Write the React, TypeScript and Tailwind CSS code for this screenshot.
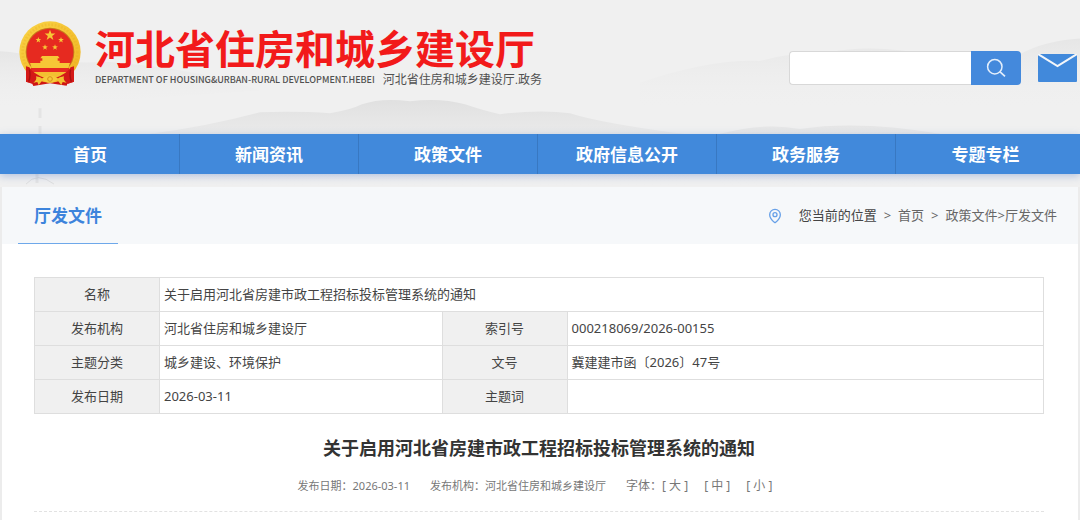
import { MapPin } from "lucide-react"

// ─── CONSTANTS ────────────────────────────────────────────────────────────────

const NAV_ITEMS = ["首页", "新闻资讯", "政策文件", "政府信息公开", "政务服务", "专题专栏"]

const LABEL_CLASS = "border border-[#dedede] bg-[#f0f0f0] p-0 text-center font-normal"
const VALUE_CLASS = "border border-[#dedede] px-1 py-0"

const STAR = "M0 -10 L2.4 -3.2 L9.5 -3.1 L3.8 1.2 L5.9 8.1 L0 4 L-5.9 8.1 L-3.8 1.2 L-9.5 -3.1 L-2.4 -3.2 Z"

// ─── DRAWINGS ─────────────────────────────────────────────────────────────────

function Emblem() {
  return (
    <svg viewBox="27 18 186 198" className="h-[66px] w-[62px] shrink-0" role="img" aria-label="国徽">
      <defs>
        <linearGradient id="gold" x1="0" y1="0" x2="1" y2="1">
          <stop offset="0" stopColor="#f9d447" />
          <stop offset="1" stopColor="#f0b322" />
        </linearGradient>
      </defs>
      <path d="M48 156 L60 150 H180 L192 156 L192 200 L172 206 L170 212 L120 205 L70 213 L66 205 L48 200 Z" fill="#cf1513" />
      <circle cx="120" cy="111" r="92" fill="url(#gold)" />
      <circle cx="120" cy="111" r="82" fill="none" stroke="#e9a91c" strokeWidth="8" strokeDasharray="5 5" opacity="0.3" />
      <circle cx="120" cy="111" r="73" fill="#c9761b" />
      <circle cx="120" cy="111" r="70" fill="#e62a20" />
      <g fill="#f6c836">
        <path d={STAR} transform="translate(120 61) scale(1.7)" />
        <path d={STAR} transform="translate(85 75) scale(0.9)" />
        <path d={STAR} transform="translate(153 75) scale(0.9)" />
        <path d={STAR} transform="translate(105 97) scale(0.9)" />
        <path d={STAR} transform="translate(135 97) scale(0.9)" />
        <path d="M96 123 H144 L149 130 H143 V137 H149 V144 H91 V137 H97 V130 H91 Z" />
        <path d="M60 144 H180 L175 159 H65 Z" />
      </g>
      <path d="M63 159 H177 V171 H63 Z" fill="#e62a20" />
      <path d="M66 171 H174 L150 190 H90 Z" fill="#f3c031" />
      <path d="M48 154 L58 157 Q72 178 102 188 L66 206 L48 200 Z" fill="#d41917" />
      <path d="M192 154 L182 157 Q168 178 138 188 L174 206 L192 200 Z" fill="#d41917" />
      <path d="M58 164 Q63 180 56 200 M182 164 Q177 180 184 200" stroke="#a90f10" strokeWidth="4" fill="none" />
      <path d="M78 184 Q92 186 100 193 L86 210 L82 201 L70 203 Q82 195 78 184 Z" fill="#f3c031" />
      <path d="M162 184 Q148 186 140 193 L154 210 L158 201 L170 203 Q158 195 162 184 Z" fill="#f3c031" />
      <path d="M96 191 Q120 170 144 191 Q120 216 96 191 Z" fill="#f6ca3a" />
      <circle cx="120" cy="192" r="7" fill="none" stroke="#d9901a" strokeWidth="3" />
    </svg>
  )
}

// Ink-wash hills behind the header and the navigation
function Hills() {
  return (
    <svg viewBox="0 0 1080 190" preserveAspectRatio="none" className="absolute inset-0 h-full w-full" aria-hidden="true">
      <defs>
        <linearGradient id="hill" x1="0" y1="0" x2="0" y2="1">
          <stop offset="0" stopColor="#dcdcdc" />
          <stop offset="1" stopColor="#efefef" stopOpacity="0" />
        </linearGradient>
      </defs>
      <g fill="url(#hill)">
        <path d="M0 52 Q20 53 40 59 T110 63 Q200 70 260 92 L0 110 Z" opacity="0.5" />
        <path d="M150 136 Q210 128 260 114 Q300 113 330 115 Q350 112 362 106 Q382 99 410 103 Q440 99 465 106 Q485 113 500 116 Q540 111 570 115 Q600 125 690 137 V190 H150 Z" opacity="0.8" />
        <path d="M640 84 Q710 60 760 62 Q790 53 830 53 Q860 47 900 51 Q960 61 1020 55 Q1045 41 1080 39 V110 H640 Z" opacity="0.5" />
        <path d="M720 136 Q765 124 800 131 Q860 122 940 136 V190 H720 Z" opacity="0.5" />
      </g>
      <g fill="none" stroke="#d2d2d2">
        <path d="M40 110 V120 M40 128 V136 M37 176 V186" strokeWidth="3" opacity="0.4" />
        <path d="M26 187 Q37 174 54 187" opacity="0.6" />
      </g>
    </svg>
  )
}

function SearchIcon() {
  return (
    <svg viewBox="0 0 20 20" className="h-5 w-5" fill="none" stroke="#e3eefb" aria-hidden="true">
      <circle cx="8.8" cy="8.7" r="7.2" strokeWidth="1.5" />
      <path d="M13.8 13.6 L19 18.4" strokeWidth="1.7" />
    </svg>
  )
}

// ─── PAGE ─────────────────────────────────────────────────────────────────────

export default function App() {
  return (
    <div className="min-h-screen bg-[#ececec] font-['Noto_Sans','Noto_Sans_CJK_SC',sans-serif] text-[#444]">
      {/* ── HEADER ────────────────────────────────────────────────────── */}
      <div className="relative bg-[#f0f0f0] pb-[13px]">
        <Hills />

        <header className="relative flex h-[134px] items-start justify-between pr-[3px] pl-[19px]">
          <div className="flex gap-[14px] pt-[21px]">
            <Emblem />
            <div className="pt-[6px]">
              <h1 className="font-['Liberation_Sans','Noto_Sans_CJK_SC',sans-serif] text-[40px] leading-[46px] font-bold whitespace-nowrap text-[#f21a1a]">
                河北省住房和城乡建设厅
              </h1>
              <p className="flex items-center gap-2 leading-[14px] whitespace-nowrap text-[#505050]">
                <span className="font-['Noto_Sans_CJK_SC',sans-serif] text-[9px] font-medium">
                  DEPARTMENT OF HOUSING&amp;URBAN-RURAL DEVELOPMENT.HEBEI
                </span>
                <span className="font-['Liberation_Sans','Noto_Sans_CJK_SC',sans-serif] text-[12px]">
                  河北省住房和城乡建设厅.政务
                </span>
              </p>
            </div>
          </div>

          <div className="flex items-center gap-[17px] pt-[51px]">
            <form className="flex h-[34px]" role="search" onSubmit={(e) => e.preventDefault()}>
              <input
                type="text"
                aria-label="搜索"
                className="w-[182px] rounded-l-[4px] border border-r-0 border-[#d8d8d8] bg-white px-2 text-[13px] outline-none"
              />
              <button
                type="submit"
                aria-label="搜索"
                className="flex w-[50px] items-center justify-center rounded-r-[4px] bg-[#4489dc]"
              >
                <SearchIcon />
              </button>
            </form>
            <a href="#mail" aria-label="邮箱">
              <svg viewBox="0 0 39 28" className="h-7 w-[39px]" aria-hidden="true">
                <rect width="39" height="28" rx="1" fill="#4189db" />
                <path d="M0 0 L19.5 12 L39 0" fill="none" stroke="#f3f6fa" strokeWidth="2" />
              </svg>
            </a>
          </div>
        </header>

        {/* ── NAVIGATION ──────────────────────────────────────────────── */}
        <nav className="relative grid h-10 grid-cols-6 bg-[#4189db] pr-[5px] pl-px shadow-[0_2px_8px_rgba(65,110,190,0.35)]">
          {NAV_ITEMS.map((item) => (
            <a
              key={item}
              href="#nav"
              className="flex items-center justify-center border-r border-[#3878c2] pt-px text-[17px] font-bold text-white last:border-r-0"
            >
              {item}
            </a>
          ))}
        </nav>
      </div>

      <main className="mx-[2px] min-h-[333px] bg-white pb-2">
        {/* ── BREADCRUMB ────────────────────────────────────────────── */}
        <div className="flex h-[57px] justify-between bg-[#f6f8fa] pr-[21px] pl-4">
          <h2 className="flex items-center border-b border-[#6ea8ea] px-4 pt-[2px] text-[17px] font-bold text-[#3d84dc]">
            厅发文件
          </h2>
          <div className="flex items-center text-[13px] text-[#666]">
            <MapPin className="mr-4 h-4 w-4 text-[#68a1e8]" strokeWidth={2} aria-hidden="true" />
            <span className="text-[#444]">您当前的位置</span>
            <span className="mx-[7px]">&gt;</span>
            <a href="#home">首页</a>
            <span className="mx-[7px]">&gt;</span>
            <a href="#policy">政策文件</a>
            <span>&gt;</span>
            <a href="#office">厅发文件</a>
          </div>
        </div>

        <div className="pt-[33px] pr-[34px] pl-8">
          {/* ── DOCUMENT DATA ───────────────────────────────────────── */}
          <table className="w-full table-fixed border-collapse text-[13px]">
            <colgroup>
              <col className="w-[125px]" />
              <col className="w-[28%]" />
              <col className="w-[125px]" />
              <col />
            </colgroup>
            <tbody>
              <tr className="h-[34px]">
                <th scope="row" className={LABEL_CLASS}>名称</th>
                <td colSpan={3} className={VALUE_CLASS}>关于启用河北省房建市政工程招标投标管理系统的通知</td>
              </tr>
              <tr className="h-[34px]">
                <th scope="row" className={LABEL_CLASS}>发布机构</th>
                <td className={VALUE_CLASS}>河北省住房和城乡建设厅</td>
                <th scope="row" className={LABEL_CLASS}>索引号</th>
                <td className={VALUE_CLASS}>000218069/2026-00155</td>
              </tr>
              <tr className="h-[34px]">
                <th scope="row" className={LABEL_CLASS}>主题分类</th>
                <td className={VALUE_CLASS}>城乡建设、环境保护</td>
                <th scope="row" className={LABEL_CLASS}>文号</th>
                <td className={VALUE_CLASS}>冀建建市函〔2026〕47号</td>
              </tr>
              <tr className="h-[34px]">
                <th scope="row" className={LABEL_CLASS}>发布日期</th>
                <td className={VALUE_CLASS}>2026-03-11</td>
                <th scope="row" className={LABEL_CLASS}>主题词</th>
                <td className={VALUE_CLASS}></td>
              </tr>
            </tbody>
          </table>

          {/* ── ARTICLE HEAD ────────────────────────────────────────── */}
          <h1 className="mt-[18px] text-center text-[18px] leading-8 font-bold text-[#333]">
            关于启用河北省房建市政工程招标投标管理系统的通知
          </h1>
          <div className="flex items-center justify-center gap-5 border-b border-dashed border-[#e2e2e2] pt-3 pr-2 pb-[15px] text-[11px] leading-5 text-[#777]">
            <span>发布日期：2026-03-11</span>
            <span>发布机构：河北省住房和城乡建设厅</span>
            <span className="flex gap-4 text-[12px]">
              <span>
                字体：<button type="button">[ 大 ]</button>
              </span>
              <button type="button">[ 中 ]</button>
              <button type="button">[ 小 ]</button>
            </span>
          </div>
        </div>
      </main>
    </div>
  )
}
